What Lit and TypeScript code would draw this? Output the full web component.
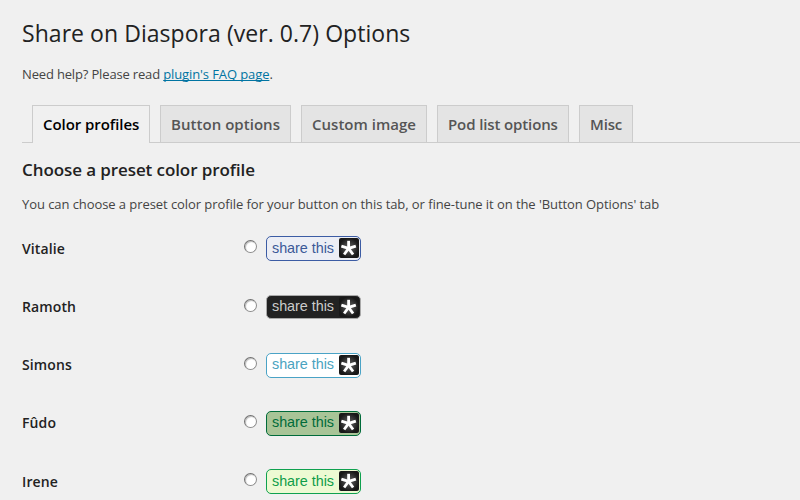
import { LitElement, html, css, svg } from "lit";
import { customElement, property, state } from "lit/decorators.js";
import { classMap } from "lit/directives/class-map.js";

@customElement("share-button")
class ShareButton extends LitElement {
  @property({ reflect: true }) scheme = "vitalie";
  static styles = css`
    :host { display: flex; box-sizing: border-box; width: 95px; height: 25px; border: 1px solid; border-radius: 5px; padding: 1px 1px 0 5px; font: 14.4px/20px "Liberation Sans", Arial, sans-serif; }
    :host([scheme="vitalie"]) { color: #3b5998; border-color: #3c5ca4; background: #eceef5; }
    :host([scheme="ramoth"]) { color: #ccc; border-color: #aaa; background: #222; height: 24px; }
    :host([scheme="simons"]) { color: #4aa3bf; border-color: #4aa3c6; background: #fff; }
    :host([scheme="fudo"]) { color: #006b3a; border-color: #006b3a; background: #a8c497; }
    :host([scheme="irene"]) { color: #0f9d49; border-color: #0fa14f; background: #edfad3; }
    .label { width: 67px; margin-top: -0.75px; white-space: nowrap; letter-spacing: -0.04px; }
    svg { display: block; flex: none; width: 20px; height: 20px; }
  `;
  render() {
    return html`<span class="label">share this</span>
      <svg viewBox="0 0 20 20">
        <defs><radialGradient id="g"><stop offset="0" stop-color="#666"/><stop offset="1" stop-color="#181818"/></radialGradient></defs>
        <rect width="20" height="20" rx="2" fill="url(#g)"/>
        <g stroke="#fff" stroke-width="2.8" fill="none">
          ${[0, 72, 144, 216, 288].map((a) => svg`<path d="M9.6 10.4V2.8" transform="rotate(${a} 9.6 10.4)"/>`)}
        </g>
      </svg>`;
  }
}

@customElement("app-root")
class AppRoot extends LitElement {
  @state() private tab = 0;
  private tabs = ["Color profiles", "Button options", "Custom image", "Pod list options", "Misc"];
  private profiles = [["Vitalie", "vitalie"], ["Ramoth", "ramoth"], ["Simons", "simons"], ["Fûdo", "fudo"], ["Irene", "irene"]];
  static styles = css`
    :host { display: block; box-sizing: border-box; height: 500px; overflow: hidden; background: #f0f0f0; padding-left: 22px; color: #444; font: 13px/20px "Open Sans", sans-serif; font-feature-settings: "liga" 1; }
    h1 { margin: 0; padding-top: 19px; font-size: 23px; font-weight: 400; line-height: 29px; letter-spacing: 0.05px; color: #222; }
    p { margin: 0; }
    .help { padding-top: 16px; letter-spacing: -0.16px; }
    a { color: #0074a2; letter-spacing: -0.1px; text-decoration-skip-ink: none; }
    nav { display: flex; gap: 10px; padding-left: 10px; margin-top: 21px; height: 37px; border-bottom: 1px solid #ccc; }
    .tab { box-sizing: border-box; height: 37px; border: 1px solid #ccc; border-bottom: 0; padding: 6px 0 6px 10px; background: #e4e4e4; color: #555; font-size: 15px; font-weight: 600; line-height: 24px; white-space: nowrap; cursor: pointer; }
    .tab:nth-child(1) { width: 118px; letter-spacing: -0.06px; }
    .tab:nth-child(2) { width: 131px; letter-spacing: 0.04px; }
    .tab:nth-child(3) { width: 126px; letter-spacing: 0.02px; }
    .tab:nth-child(4) { width: 132px; letter-spacing: -0.12px; }
    .tab:nth-child(5) { width: 54px; letter-spacing: -0.15px; }
    .active { height: 38px; background: #f0f0f0; color: #000; }
    h2 { margin: 16px 0 0; font-size: 17px; line-height: 21px; font-weight: 600; letter-spacing: -0.09px; color: #222; }
    .intro { padding-top: 14px; letter-spacing: -0.072px; }
    .rows { padding-top: 22.3px; }
    .row { display: grid; grid-template-columns: 222px 22px auto; height: 58.25px; color: #222; font-size: 14px; font-weight: 600; }
    .name { padding-top: 2.25px; letter-spacing: 0.12px; }
    .radio { appearance: none; box-sizing: border-box; width: 13px; height: 13px; margin: 4px 0 0; border: 1px solid #707070; border-right-color: #8c8c8c; border-bottom-color: #8c8c8c; border-radius: 50%; background: #fff; box-shadow: inset 1px 1px 1px #bbb; }
  `;
  render() {
    return html`
      <h1>Share on Diaspora (ver. 0.7) Options</h1>
      <p class="help">Need help? Please read <a href="#">plugin's FAQ page</a>.</p>
      <nav>${this.tabs.map((t, i) => html`<div class=${classMap({ tab: true, active: i === this.tab })} @click=${() => (this.tab = i)}>${t}</div>`)}</nav>
      <h2>Choose a preset color profile</h2>
      <p class="intro">You can choose a preset color profile for your button on this tab, or fine-tune it on the 'Button Options' tab</p>
      <div class="rows">${this.profiles.map(([n, s]) => html`<div class="row"><span class="name">${n}</span><input class="radio" type="radio" name="profile" aria-label=${n}><share-button scheme=${s}></share-button></div>`)}</div>
    `;
  }
}
